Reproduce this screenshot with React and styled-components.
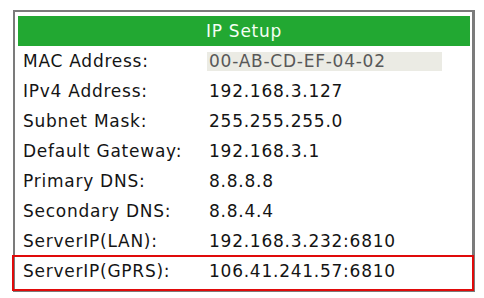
import React from "react";
import styled, { createGlobalStyle } from "styled-components";

const rows = [
  { label: "MAC Address:", value: "00-AB-CD-EF-04-02", field: true },
  { label: "IPv4 Address:", value: "192.168.3.127" },
  { label: "Subnet Mask:", value: "255.255.255.0" },
  { label: "Default Gateway:", value: "192.168.3.1" },
  { label: "Primary DNS:", value: "8.8.8.8" },
  { label: "Secondary DNS:", value: "8.8.4.4" },
  { label: "ServerIP(LAN):", value: "192.168.3.232:6810" },
  { label: "ServerIP(GPRS):", value: "106.41.241.57:6810" },
];

function App() {
  return (
    <>
      <GlobalStyle />
      <Frame>
        <Header>IP Setup</Header>
        {rows.map((row) => (
          <Row key={row.label}>
            <Label>{row.label}</Label>
            {row.field ? <Field>{row.value}</Field> : <Value>{row.value}</Value>}
          </Row>
        ))}
        <Highlight />
      </Frame>
    </>
  );
}

export default App;

const GlobalStyle = createGlobalStyle`
  body {
    margin: 0;
    background: #fff;
    font-family: "DejaVu Sans", Verdana, sans-serif;
  }
`;

const Frame = styled.div`
  position: relative;
  box-sizing: border-box;
  margin: 10px 0 0 13px;
  width: 462px;
  border: 2px solid #7b7b7b;
  border-right-width: 3px;
  padding: 4px 2px 4px 3px;
`;

const Header = styled.div`
  height: 30px;
  background: #22a832;
  color: #f4fff4;
  font-size: 17px;
  letter-spacing: 0.75px;
  display: flex;
  align-items: center;
  justify-content: center;
`;

const Row = styled.div`
  height: 30px;
  display: flex;
  align-items: center;
  font-size: 17px;
  letter-spacing: 0.75px;
  color: #141414;
`;

const Label = styled.div`
  box-sizing: border-box;
  width: 189px;
  padding-left: 5px;
`;

const Value = styled.div`
  padding-left: 2px;
`;

const Field = styled.div`
  box-sizing: border-box;
  width: 235px;
  height: 19px;
  padding-left: 2px;
  background: #ebebe4;
  color: #585858;
  display: flex;
  align-items: center;
`;

const Highlight = styled.div`
  position: absolute;
  left: -3px;
  top: 243px;
  width: 462px;
  height: 36px;
  box-sizing: border-box;
  border: 2px solid #e00a0a;
  pointer-events: none;
`;
